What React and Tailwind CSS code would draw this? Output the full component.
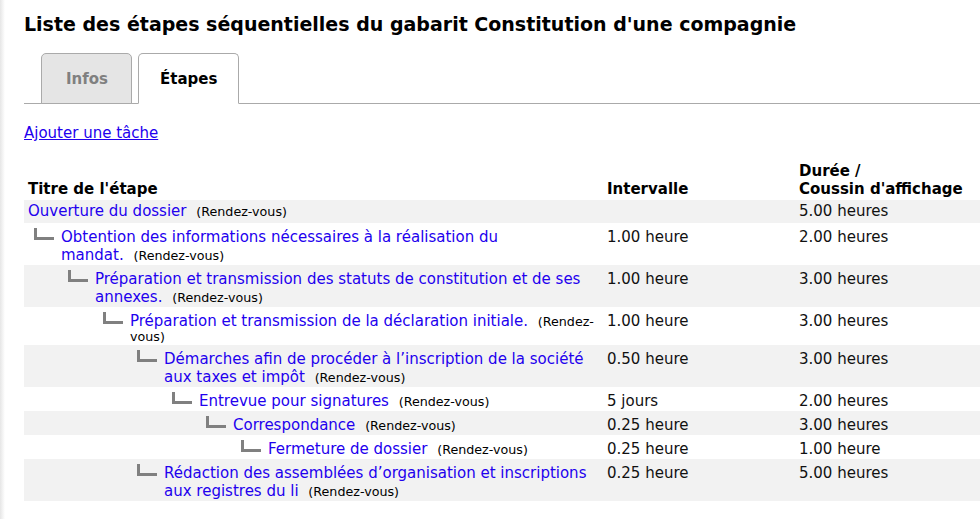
import React from "react";

const font = { fontFamily: '"DejaVu Sans", Verdana, sans-serif' };

const steps = [
  { title: "Ouverture du dossier", level: 0, interval: "", duration: "5.00 heures" },
  {
    title: "Obtention des informations nécessaires à la réalisation du",
    rest: "mandat.",
    level: 1,
    interval: "1.00 heure",
    duration: "2.00 heures",
  },
  {
    title: "Préparation et transmission des statuts de constitution et de ses annexes.",
    level: 2,
    interval: "1.00 heure",
    duration: "3.00 heures",
  },
  {
    title: "Préparation et transmission de la déclaration initiale.",
    level: 3,
    interval: "1.00 heure",
    duration: "3.00 heures",
  },
  {
    title: "Démarches afin de procéder à l’inscription de la société aux taxes et impôt",
    level: 4,
    interval: "0.50 heure",
    duration: "3.00 heures",
  },
  { title: "Entrevue pour signatures", level: 5, interval: "5 jours", duration: "2.00 heures" },
  { title: "Correspondance", level: 6, interval: "0.25 heure", duration: "3.00 heures" },
  { title: "Fermeture de dossier", level: 7, interval: "0.25 heure", duration: "1.00 heure" },
  {
    title: "Rédaction des assemblées d’organisation et inscriptions aux registres du li",
    level: 4,
    interval: "0.25 heure",
    duration: "5.00 heures",
  },
];

// indentation before the tree connector, one entry per level
const indents = [
  "",
  "pl-[6px]",
  "pl-[40px]",
  "pl-[75px]",
  "pl-[109px]",
  "pl-[144px]",
  "pl-[178px]",
  "pl-[213px]",
];

const Connector = ({ level }) => (
  <div className={`${indents[level]} shrink-0 pr-[7px]`}>
    <div className="w-[20px] h-[12px] border-l-[3px] border-b-[3px] border-[#808080]" />
  </div>
);

const StepRow = ({ step, index }) => {
  const pad = step.level > 0 ? "pt-[5px] pb-[1px]" : "pt-[2px] pb-[3px]";
  return (
    <tr className={index % 2 === 0 ? "bg-[#f2f2f2]" : "bg-white"}>
      <td className={`${pad} pl-[4px] pr-[4px] align-top`}>
        <div className="flex items-start">
          {step.level > 0 && <Connector level={step.level} />}
          <div className="min-w-0 text-[15px] leading-[12px]">
            <a href="#" className="text-[#2200ee] leading-[18px]">
              {step.title}
              {step.rest && (
                <>
                  <br />
                  {step.rest}
                </>
              )}
            </a>{" "}
            <span className="text-[12.7px] leading-[14px] text-black pl-[5px]">(Rendez-vous)</span>
          </div>
        </div>
      </td>
      <td className={`${pad} px-[4px] align-top text-[15px] leading-[18px] text-[#111]`}>
        {step.interval}
      </td>
      <td className={`${pad} px-[4px] align-top text-[15px] leading-[18px] text-[#111]`}>
        {step.duration}
      </td>
    </tr>
  );
};

export default function App() {
  return (
    <div className="flex min-h-screen bg-white" style={font}>
      <div className="w-[5px] shrink-0 bg-linear-to-r from-[#e6e6e6] to-white" />
      <div className="flex-1 pl-[19px] leading-[18px] text-[#111]">
        <h1 className="pt-[12px] text-[19px] leading-[24px] font-bold text-black">
          Liste des étapes séquentielles du gabarit Constitution d'une compagnie
        </h1>

        <div className="mt-[17px] flex items-end gap-[6px] border-b border-[#aaaaaa] pl-[17px] h-[51px]">
          <div className="-mb-px h-[51px] flex items-center pl-[24px] pr-[23px] rounded-t-[5px] border border-[#aaaaaa] bg-[#e5e5e5] text-[15px] font-bold text-[#808080]">
            Infos
          </div>
          <div className="-mb-px h-[51px] flex items-center px-[21px] rounded-t-[5px] border border-[#aaaaaa] border-b-white bg-white text-[15px] font-bold text-black">
            Étapes
          </div>
        </div>

        <div className="mt-[20px]">
          <a href="#" className="text-[15px] text-[#2200ee] underline">
            Ajouter une tâche
          </a>
        </div>

        <table className="mt-[18px] w-[956px] table-fixed border-collapse">
          <colgroup>
            <col className="w-[579px]" />
            <col className="w-[192px]" />
            <col className="w-[185px]" />
          </colgroup>
          <thead>
            <tr>
              <th className="px-[4px] pt-[2px] pb-[2px] text-left align-bottom text-[15px] font-bold text-black">
                Titre de l'étape
              </th>
              <th className="px-[4px] pt-[2px] pb-[2px] text-left align-bottom text-[15px] font-bold text-black">
                Intervalle
              </th>
              <th className="px-[4px] pt-[2px] pb-[2px] text-left align-bottom text-[15px] font-bold text-black">
                Durée /<br />
                Coussin d'affichage
              </th>
            </tr>
          </thead>
          <tbody>
            {steps.map((step, i) => (
              <StepRow key={i} step={step} index={i} />
            ))}
          </tbody>
        </table>
      </div>
    </div>
  );
}
